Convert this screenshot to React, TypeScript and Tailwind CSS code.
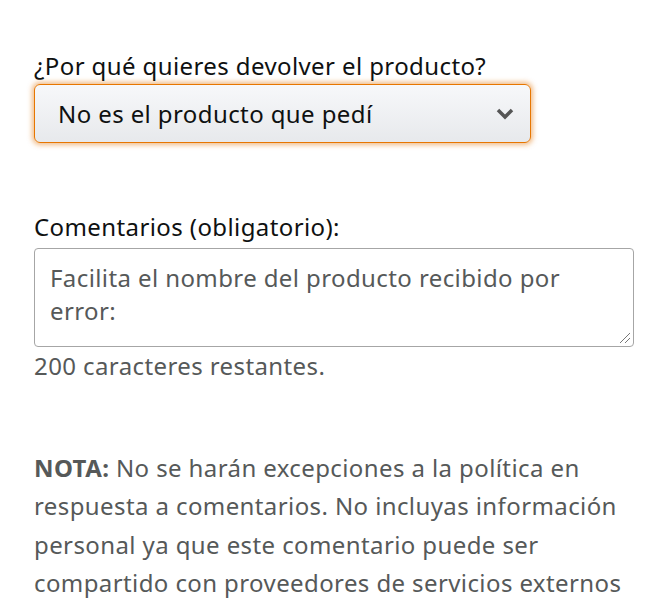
export default function App() {
  return (
    <div className="min-h-screen bg-white pl-[34px] pr-[13px] pt-[50px] font-['Noto_Sans',sans-serif] text-[24px] tracking-[0.4px] text-[#0f1111]">
      <label className="block leading-[32px]">¿Por qué quieres devolver el producto?</label>
      <div className="mt-[2px] flex h-[59px] w-[497px] items-center justify-between rounded-[6px] border border-[#e77600] bg-gradient-to-b from-[#f7f8fa] to-[#e7e9ec] pl-[23px] pr-[16px] shadow-[0_0_5px_2px_rgba(228,121,17,0.5)]">
        <span>No es el producto que pedí</span>
        <svg width="18" height="12" viewBox="0 0 18 12" className="text-[#555]">
          <path d="M2 2 L9 9 L16 2" fill="none" stroke="currentColor" strokeWidth="3.5" />
        </svg>
      </div>

      <label className="mt-[68px] block leading-[32px]">Comentarios (obligatorio):</label>
      <div className="relative mt-[5px] h-[99px] w-[600px] rounded-[4px] border border-[#a6a6a6] pl-[15px] pr-[40px] pt-[12px]">
        <p className="leading-[33px] text-[#565959]">
          Facilita el nombre del producto recibido por error:
        </p>
        <svg width="14" height="14" viewBox="0 0 14 14" className="absolute bottom-[2px] right-[2px]">
          <path d="M13 3 L3 13 M13 8 L8 13" stroke="#777" strokeWidth="1" />
        </svg>
      </div>
      <p className="mt-[3px] leading-[32px] text-[#565959]">200 caracteres restantes.</p>

      <p className="mt-[67px] w-[600px] leading-[38.4px] text-[#565959]">
        <b>NOTA:</b> No se harán excepciones a la política en respuesta a comentarios. No incluyas información personal ya que este comentario puede ser compartido con proveedores de servicios externos
      </p>
    </div>
  )
}
